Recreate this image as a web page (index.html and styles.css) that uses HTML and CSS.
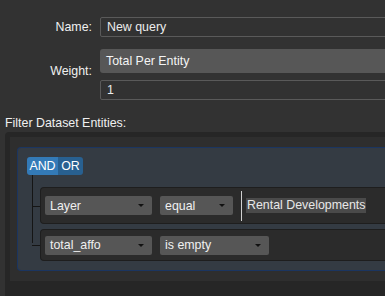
FILE: index.html
```html
<!DOCTYPE html>
<html>
<head>
<meta charset="utf-8">
<link rel="stylesheet" href="styles.css">
</head>
<body>
<div class="page">
  <div class="form">
    <div class="row">
      <label class="lbl">Name:</label>
      <div class="input">New query</div>
    </div>
    <div class="row weight">
      <label class="lbl lbl-weight">Weight:</label>
      <div class="stack">
        <div class="select-big">Total Per Entity</div>
        <div class="input">1</div>
      </div>
    </div>
  </div>
  <div class="section-title">Filter Dataset Entities:</div>
  <div class="well">
    <div class="well-inner">
      <div class="group">
        <div class="connector"></div>
        <div class="conds">
          <span class="btn btn-and">AND</span><span class="btn btn-or">OR</span>
        </div>
        <div class="rules">
          <div class="rule rule-tall">
            <div class="sel w-field"><span>Layer</span><svg class="caret" width="6" height="3" viewBox="0 0 6 3"><path d="M0 0h6L3 3z" fill="#111"/></svg></div>
            <div class="sel w-op"><span>equal</span><svg class="caret" width="6" height="3" viewBox="0 0 6 3"><path d="M0 0h6L3 3z" fill="#111"/></svg></div>
            <div class="value"><span class="hl">Rental Developments</span></div>
          </div>
          <div class="rule rule-short">
            <div class="sel w-field"><span>total_affo</span><svg class="caret" width="6" height="3" viewBox="0 0 6 3"><path d="M0 0h6L3 3z" fill="#111"/></svg></div>
            <div class="sel w-op2"><span>is empty</span><svg class="caret" width="6" height="3" viewBox="0 0 6 3"><path d="M0 0h6L3 3z" fill="#111"/></svg></div>
          </div>
        </div>
      </div>
    </div>
  </div>
</div>
</body>
</html>
```

FILE: styles.css
```css
html, body {
  margin: 0;
  padding: 0;
  overflow: hidden;
  background: #323232;
}
body {
  font-family: "Liberation Sans", Arial, sans-serif;
  font-size: 12.4px;
  color: #ececec;
}
.page {
  width: 640px;
  height: 296px;
  overflow: hidden;
}
.form {
  padding-top: 17px;
}
.row {
  display: grid;
  grid-template-columns: 92px 1fr;
  column-gap: 8px;
  align-items: center;
}
.row.weight {
  margin-top: 12px;
  align-items: start;
}
.lbl {
  text-align: right;
  line-height: 14px;
  color: #f0f0f0;
}
.lbl-weight {
  padding-top: 15px;
}
.input {
  box-sizing: border-box;
  height: 20px;
  line-height: 18px;
  border: 1px solid #5a5a5a;
  border-radius: 2px;
  background: #323232;
  padding-left: 6px;
  color: #ececec;
}
.stack {
  display: flex;
  flex-direction: column;
  gap: 7px;
}
.select-big {
  box-sizing: border-box;
  height: 24px;
  line-height: 24px;
  background: #575757;
  border-radius: 3px;
  padding-left: 6px;
  color: #f4f4f4;
}
.section-title {
  margin-top: 16px;
  padding-left: 5px;
  line-height: 14px;
  color: #f0f0f0;
}
.well {
  margin: 2px 0 0 5px;
  background: #262626;
  padding: 5px 0 40px 5px;
  border-radius: 4px 0 0 0;
}
.well-inner {
  background: #2e2e2e;
  padding: 10px 0 10px 7px;
}
.group {
  position: relative;
  background: #343b43;
  border: 1px solid #1b3560;
  border-right: none;
  border-radius: 4px 0 0 4px;
  padding: 9px 0 9px 9px;
}
.connector {
  position: absolute;
  left: 14px;
  top: 27px;
  width: 1px;
  height: 68px;
  background: #151515;
}
.conds {
  display: flex;
  height: 18px;
}
.btn {
  display: block;
  height: 18px;
  line-height: 18px;
  text-align: center;
  color: #fff;
}
.btn-and {
  width: 31px;
  background: #337ab7;
  border-radius: 3px 0 0 3px;
}
.btn-or {
  width: 25px;
  background: #286090;
  border-radius: 0 3px 3px 0;
}
.rules {
  margin: 12px 0 0 13px;
  display: flex;
  flex-direction: column;
  gap: 5px;
}
.rule {
  position: relative;
  box-sizing: border-box;
  display: flex;
  align-items: center;
  gap: 8px;
  background: #2b2b2b;
  border: 1px solid #1e1e1e;
  border-right: none;
  border-radius: 4px 0 0 4px;
  padding-left: 4px;
}
.rule::before {
  content: "";
  position: absolute;
  left: -9px;
  top: 50%;
  width: 8px;
  height: 1px;
  background: #151515;
}
.rule-tall {
  height: 37px;
}
.rule-short {
  height: 32px;
}
.sel {
  box-sizing: border-box;
  height: 19px;
  background: #565656;
  border-radius: 2px;
  padding: 0 8px 0 5px;
  display: flex;
  align-items: center;
  justify-content: space-between;
  color: #f0f0f0;
}
.w-field { width: 107px; }
.w-op { width: 73px; }
.w-op2 { width: 109px; }
.value {
  box-sizing: border-box;
  height: 30px;
  border-left: 1px solid #d0d0d0;
  padding-left: 4px;
  display: flex;
  align-items: center;
}
.hl {
  background: #4a4a4a;
  color: #e8e8e8;
  line-height: 15px;
  padding: 0 1px;
}
```
